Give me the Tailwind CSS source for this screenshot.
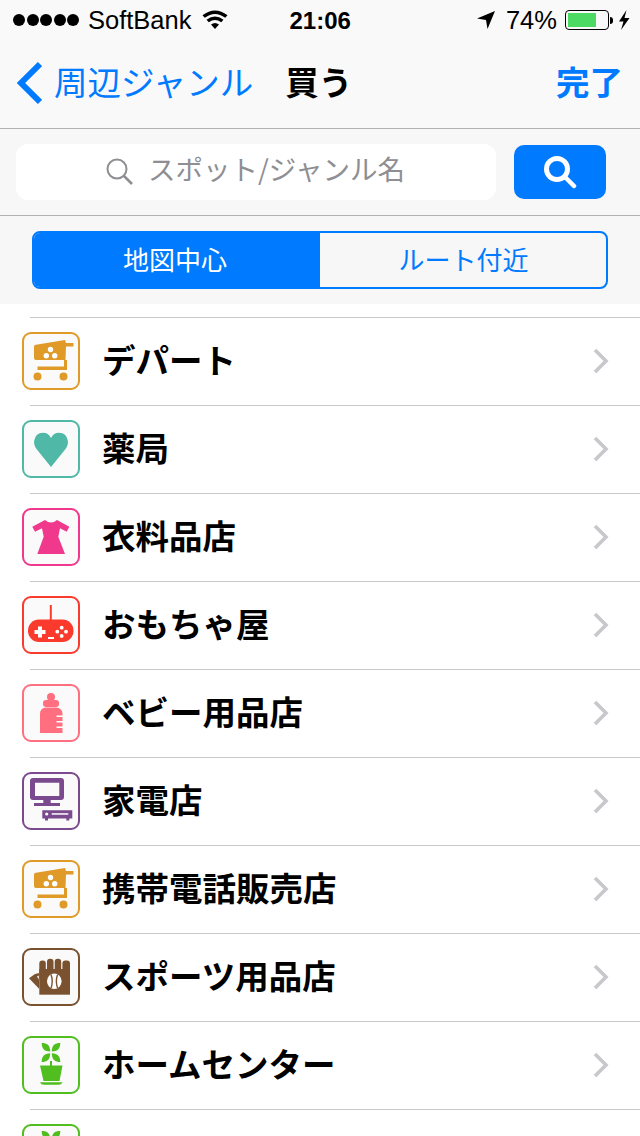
<!DOCTYPE html>
<html lang="ja">
<head>
    <meta charset="UTF-8">
    <meta name="viewport" content="width=device-width, initial-scale=1.0">
    <title>買う</title>
    <script src="https://cdn.jsdelivr.net/npm/@tailwindcss/browser@4"></script>
</head>
<body class="bg-white font-['Noto_Sans_CJK_JP',sans-serif]">
    <svg width="0" height="0" class="absolute">
        <defs>
            <symbol id="chevron" viewBox="0 0 18 28">
                <path d="M3 3l11 11L3 25" fill="none" stroke="#c7c7cc" stroke-width="3.6"/>
            </symbol>
            <symbol id="icon-cart" viewBox="0 0 58 58">
                <rect x="1" y="1" width="56" height="56" rx="8" fill="#fafafa" stroke="#e09a27" stroke-width="2"/>
                <path d="M12 14.5Q12 13 14 12.700L43 8l1 3h7.500v3.500H44L43.500 28H14q-2 0-2-2z" fill="#e09a27"/>
                <path d="M15.500 34.500H42V28h3v10H15.500z" fill="#e09a27"/>
                <circle cx="15.500" cy="44.500" r="4" fill="#e09a27"/>
                <circle cx="41.500" cy="44.500" r="4" fill="#e09a27"/>
                <circle cx="28.500" cy="17.500" r="2.700" fill="#fff"/>
                <circle cx="24.300" cy="23.700" r="2.700" fill="#fff"/>
                <circle cx="32.700" cy="23.700" r="2.700" fill="#fff"/>
            </symbol>
            <symbol id="icon-plant" viewBox="0 0 58 58">
                <rect x="1" y="1" width="56" height="56" rx="8" fill="#fafafa" stroke="#50be1e" stroke-width="2"/>
                <path d="M28.200 15.500C28.200 9 25 7 19.700 7 19.700 12 22 15.500 28.200 15.500zM29.800 15.500C29.800 9 33 7 38.300 7 38.300 12 36 15.500 29.800 15.500zM28.200 17.200C28.200 23.700 25 26 19.700 26 19.700 21 22 17.200 28.200 17.200zM29.800 17.200C29.800 23.700 33 26 38.300 26 38.300 21 36 17.200 29.800 17.200z" fill="#50be1e"/>
                <path d="M28 25h2v5h-2z" fill="#50be1e"/>
                <path d="M18 29.500h22.500L37.500 45h-16zM18 46.200h22.500q-1 2.500-4 2.500h-14.500q-3 0-4-2.500z" fill="#50be1e"/>
            </symbol>
        </defs>
    </svg>

    <main class="w-[640px] h-[1136px] overflow-hidden">
        <!-- status + nav -->
        <header class="bg-[#f9f9f9] border-b border-[#b2b2b2] h-[129px]">
            <div class="h-10 flex items-center text-black font-['Liberation_Sans',sans-serif] text-[25.5px]">
                <div class="flex gap-[1.500px] ml-[13px]">
                    <span class="w-3 h-3 rounded-full bg-black"></span>
                    <span class="w-3 h-3 rounded-full bg-black"></span>
                    <span class="w-3 h-3 rounded-full bg-black"></span>
                    <span class="w-3 h-3 rounded-full bg-black"></span>
                    <span class="w-3 h-3 rounded-full bg-black"></span>
                </div>
                <span class="ml-[9px] mt-[1px]">SoftBank</span>
                <svg class="ml-[11px]" width="26" height="20" viewBox="0 0 26 20">
                    <path d="M13 19l-4-4.500q4-3 8 0zM6.800 12.300l-2.300-2.600q8.500-6.500 17 0l-2.300 2.600q-6.200-4.800-12.400 0zM2.800 7.800L.5 5.200q12.500-9.500 25 0l-2.300 2.600Q13 .2 2.800 7.800z" fill="#000"/>
                </svg>
                <span class="ml-[61px] font-bold text-[24px] mt-[1px]">21:06</span>
                <svg class="ml-[125px]" width="20" height="20" viewBox="0 0 20 20">
                    <path d="M19 1L11.500 19l-1.500-9L1 8.500z" fill="#000"/>
                </svg>
                <span class="ml-[10px] mt-[1px]">74%</span>
                <div class="ml-[8px] w-[44px] h-[20px] border-[1.500px] border-black rounded-[4px] p-[2px]">
                    <div class="w-[28px] h-full bg-[#4cd964]"></div>
                </div>
                <span class="ml-[1px] w-[3px] h-[7px] bg-black rounded-r-full"></span>
                <svg class="ml-[5px]" width="12" height="20" viewBox="0 0 12 20">
                    <path d="M8.500 0L1 11.500h4.500L3 20l8.500-12H6.500z" fill="#000"/>
                </svg>
            </div>
            <div class="h-[88px] flex items-center pl-[16px] pr-[17px] text-[33.5px] leading-none">
                <svg width="26" height="44" viewBox="0 0 26 44" class="mb-[2px]">
                    <path d="M24 3L5 22l19 19" fill="none" stroke="#007aff" stroke-width="6"/>
                </svg>
                <span class="ml-[12px] mb-[6px] text-[#007aff]">周辺ジャンル</span>
                <span class="ml-[32px] mb-[6px] font-bold text-black">買う</span>
                <span class="ml-auto mb-[6px] font-bold text-[#007aff]">完了</span>
            </div>
        </header>

        <!-- search -->
        <section class="h-[87px] bg-[#f7f7f7] border-b border-[#b2b2b2] flex items-center pl-4 pb-[1px]">
            <div class="w-[480px] h-14 bg-white rounded-xl flex items-center pl-[89px] text-[#8e8e93] text-[27.5px]">
                <svg width="30" height="30" viewBox="0 0 30 30">
                    <circle cx="12" cy="12" r="9.500" fill="none" stroke="#8e8e93" stroke-width="2"/>
                    <path d="M19 19l8 8" stroke="#8e8e93" stroke-width="2.500"/>
                </svg>
                <span class="ml-[13px] mb-[6px]">スポット/ジャンル名</span>
            </div>
            <button class="ml-[18px] w-[92px] h-[54px] bg-[#007aff] rounded-[10px] flex items-center justify-center">
                <svg width="34" height="34" viewBox="0 0 34 34">
                    <circle cx="14" cy="14" r="10.500" fill="none" stroke="#fff" stroke-width="5"/>
                    <path d="M22 22l9 9" stroke="#fff" stroke-width="4.500" stroke-linecap="round"/>
                </svg>
            </button>
        </section>

        <!-- segment -->
        <section class="h-[88px] bg-[#f7f7f7] flex items-center px-8">
            <div class="w-[576px] h-[58px] border-2 border-[#007aff] rounded-lg overflow-hidden flex text-[26px]">
                <div class="w-[286px] bg-[#007aff] text-white flex items-center justify-center"><span class="mb-[4px] mr-[4px]">地図中心</span></div>
                <div class="flex-1 text-[#007aff] flex items-center justify-center"><span class="mb-[4px] ml-[1px]">ルート付近</span></div>
            </div>
        </section>

        <!-- list -->
        <ul class="pt-[13px] text-[33.5px] font-bold text-black">
            <li>
                <div class="ml-[30px] h-px bg-[#c8c7cc]"></div>
                <div class="h-[87px] flex items-center pl-[22px] pr-[30px] pb-[1px]">
                    <svg width="58" height="58"><use href="#icon-cart"/></svg>
                    <span class="ml-[22px] mb-[4px]">デパート</span>
                    <svg class="ml-auto" width="18" height="28"><use href="#chevron"/></svg>
                </div>
            </li>
            <li>
                <div class="ml-[30px] h-px bg-[#c8c7cc]"></div>
                <div class="h-[87px] flex items-center pl-[22px] pr-[30px] pb-[1px]">
                    <svg width="58" height="58" viewBox="0 0 58 58">
                        <rect x="1" y="1" width="56" height="56" rx="8" fill="#fafafa" stroke="#50b8a6" stroke-width="2"/>
                        <path d="M29 47L14.500 29Q11.500 25 12.200 20.500 13.500 13 21 12.700 26.500 12.700 29 18 31.500 12.700 37 12.700 44.500 13 45.800 20.500 46.500 25 43.500 29z" fill="#50b8a6"/>
                    </svg>
                    <span class="ml-[22px] mb-[4px]">薬局</span>
                    <svg class="ml-auto" width="18" height="28"><use href="#chevron"/></svg>
                </div>
            </li>
            <li>
                <div class="ml-[30px] h-px bg-[#c8c7cc]"></div>
                <div class="h-[87px] flex items-center pl-[22px] pr-[30px] pb-[1px]">
                    <svg width="58" height="58" viewBox="0 0 58 58">
                        <rect x="1" y="1" width="56" height="56" rx="8" fill="#fafafa" stroke="#f0388c" stroke-width="2"/>
                        <path d="M23 12Q29 17 35 12L47.300 18.700 44.700 23.700 38 20.300 36.300 28.700 43 46H15.300L21.700 28.700 20 20.300 13 23.700 10.300 18.700z" fill="#f0388c"/>
                    </svg>
                    <span class="ml-[22px] mb-[4px]">衣料品店</span>
                    <svg class="ml-auto" width="18" height="28"><use href="#chevron"/></svg>
                </div>
            </li>
            <li>
                <div class="ml-[30px] h-px bg-[#c8c7cc]"></div>
                <div class="h-[87px] flex items-center pl-[22px] pr-[30px] pb-[1px]">
                    <svg width="58" height="58" viewBox="0 0 58 58">
                        <rect x="1" y="1" width="56" height="56" rx="8" fill="#fafafa" stroke="#fb3a2e" stroke-width="2"/>
                        <path d="M27.800 9h2v15h-2z" fill="#fb3a2e"/>
                        <rect x="6" y="23.500" width="45.500" height="22.500" rx="11" fill="#fb3a2e"/>
                        <path d="M16 30.500h4v3.500h3.500v4H20v3.500h-4V38h-3.500v-4H16z" fill="#fff"/>
                        <rect x="26" y="41" width="6" height="2" fill="#fff"/>
                        <circle cx="39.700" cy="31.700" r="1.900" fill="#fff"/>
                        <circle cx="35.300" cy="35.700" r="1.900" fill="#fff"/>
                        <circle cx="44" cy="35.700" r="1.900" fill="#fff"/>
                        <circle cx="39.700" cy="40" r="1.900" fill="#fff"/>
                    </svg>
                    <span class="ml-[22px] mb-[4px]">おもちゃ屋</span>
                    <svg class="ml-auto" width="18" height="28"><use href="#chevron"/></svg>
                </div>
            </li>
            <li>
                <div class="ml-[30px] h-px bg-[#c8c7cc]"></div>
                <div class="h-[87px] flex items-center pl-[22px] pr-[30px] pb-[1px]">
                    <svg width="58" height="58" viewBox="0 0 58 58">
                        <rect x="1" y="1" width="56" height="56" rx="8" fill="#fafafa" stroke="#ff6f80" stroke-width="2"/>
                        <circle cx="29" cy="13" r="4" fill="#ff6f80"/>
                        <rect x="21" y="16" width="16" height="7" rx="3" fill="#ff6f80"/>
                        <path d="M18 30q0-6 6-6.500h10q6.500.5 6.500 6.500v19H18z" fill="#ff6f80"/>
                        <path d="M34.500 31.500h6.500v1.500h-6.500zM34.500 37h6.500v1.500h-6.500zM34.500 42.500h6.500V44h-6.500z" fill="#fff"/>
                    </svg>
                    <span class="ml-[22px] mb-[4px]">ベビー用品店</span>
                    <svg class="ml-auto" width="18" height="28"><use href="#chevron"/></svg>
                </div>
            </li>
            <li>
                <div class="ml-[30px] h-px bg-[#c8c7cc]"></div>
                <div class="h-[87px] flex items-center pl-[22px] pr-[30px] pb-[1px]">
                    <svg width="58" height="58" viewBox="0 0 58 58">
                        <rect x="1" y="1" width="56" height="56" rx="8" fill="#fafafa" stroke="#7b4a8e" stroke-width="2"/>
                        <path fill-rule="evenodd" d="M11 6h28q3 0 3 3v16q0 3-3 3H11q-3 0-3-3V9q0-3 3-3zM13 10.700V24h24.300V10.700z" fill="#7b4a8e"/>
                        <path d="M21.300 28h7.400v3H38v3H12v-3h9.300z" fill="#7b4a8e"/>
                        <path d="M20.300 38.300h30V46.500h-3v2h-3v-2H26v2h-3v-2h-2.700z" fill="#7b4a8e"/>
                        <circle cx="24.700" cy="42" r="1.600" fill="#fff"/>
                        <path d="M29.700 41.200h16.600v1.500H29.700z" fill="#fff"/>
                    </svg>
                    <span class="ml-[22px] mb-[4px]">家電店</span>
                    <svg class="ml-auto" width="18" height="28"><use href="#chevron"/></svg>
                </div>
            </li>
            <li>
                <div class="ml-[30px] h-px bg-[#c8c7cc]"></div>
                <div class="h-[87px] flex items-center pl-[22px] pr-[30px] pb-[1px]">
                    <svg width="58" height="58"><use href="#icon-cart"/></svg>
                    <span class="ml-[22px] mb-[4px]">携帯電話販売店</span>
                    <svg class="ml-auto" width="18" height="28"><use href="#chevron"/></svg>
                </div>
            </li>
            <li>
                <div class="ml-[30px] h-px bg-[#c8c7cc]"></div>
                <div class="h-[87px] flex items-center pl-[22px] pr-[30px] pb-[1px]">
                    <svg width="58" height="58" viewBox="0 0 58 58">
                        <rect x="1" y="1" width="56" height="56" rx="8" fill="#fafafa" stroke="#7a5230" stroke-width="2"/>
                        <rect x="17.300" y="12.500" width="6.500" height="20" rx="3" fill="#7a5230"/>
                        <rect x="25" y="10.700" width="6.500" height="20" rx="3" fill="#7a5230"/>
                        <rect x="32.700" y="10.700" width="6.500" height="20" rx="3" fill="#7a5230"/>
                        <rect x="40.400" y="12.500" width="7.600" height="20" rx="3" fill="#7a5230"/>
                        <path d="M17.300 21H48v25.700H17.300z" fill="#7a5230"/>
                        <path d="M13 26L7 30.300 17.300 41V25z" fill="#7a5230"/>
                        <path d="M15 28.500l1.800-1v4z" fill="#fafafa"/>
                        <ellipse cx="32.300" cy="33.300" rx="7.300" ry="7.800" fill="#fff"/>
                        <path d="M29 26.500q2.500 6.800 0 13.600M35.600 26.500q-2.500 6.800 0 13.600" fill="none" stroke="#7a5230" stroke-width="1.400"/>
                    </svg>
                    <span class="ml-[22px] mb-[4px]">スポーツ用品店</span>
                    <svg class="ml-auto" width="18" height="28"><use href="#chevron"/></svg>
                </div>
            </li>
            <li>
                <div class="ml-[30px] h-px bg-[#c8c7cc]"></div>
                <div class="h-[87px] flex items-center pl-[22px] pr-[30px] pb-[1px]">
                    <svg width="58" height="58"><use href="#icon-plant"/></svg>
                    <span class="ml-[22px] mb-[4px]">ホームセンター</span>
                    <svg class="ml-auto" width="18" height="28"><use href="#chevron"/></svg>
                </div>
            </li>
            <li>
                <div class="ml-[30px] h-px bg-[#c8c7cc]"></div>
                <div class="h-[87px] flex items-center pl-[22px] pr-[30px] pb-[1px]">
                    <svg width="58" height="58"><use href="#icon-plant"/></svg>
                </div>
            </li>
        </ul>
    </main>
</body>
</html>
